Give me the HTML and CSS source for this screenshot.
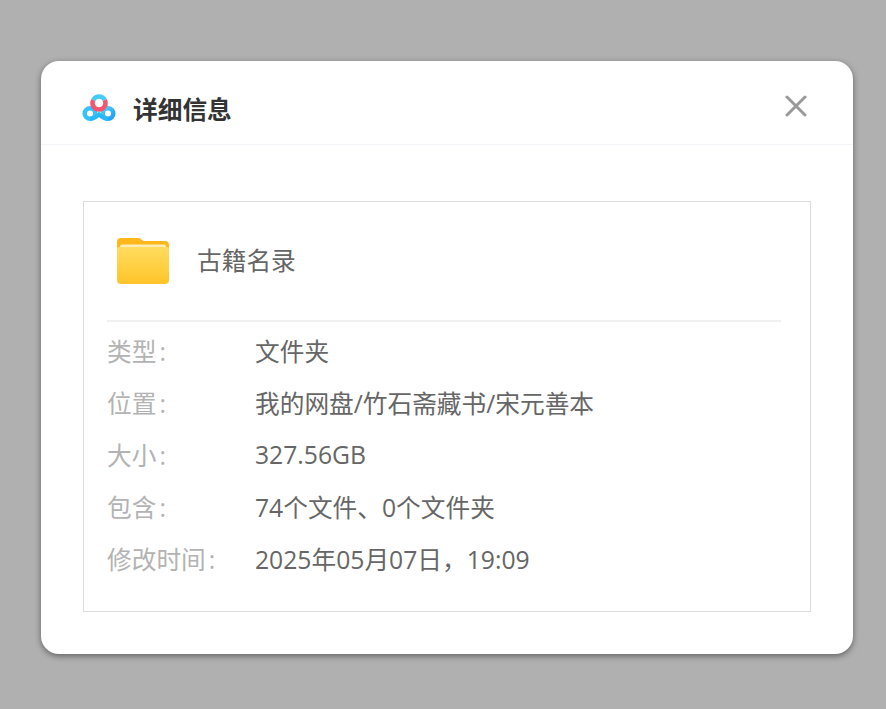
FILE: index.html
```html
<!DOCTYPE html>
<html lang="zh-CN">
<head>
<meta charset="utf-8">
<title>详细信息</title>
<link rel="stylesheet" href="styles.css">
</head>
<body>
<div class="modal">
  <header class="head">
    <svg class="logo" width="34" height="28" viewBox="0 0 34 28" fill="none">
      <defs>
        <linearGradient id="lb" x1="0" y1="0" x2="1" y2="1"><stop offset="0" stop-color="#4fd2fb"/><stop offset="1" stop-color="#1a9dfb"/></linearGradient>
      </defs>
      <circle cx="8" cy="19.500" r="5.300" stroke="#35c3fb" stroke-width="4.500"/>
      <circle cx="26" cy="19.500" r="5.300" stroke="url(#lb)" stroke-width="4.500"/>
      <path d="M8 24.800 Q13 24.800 17 20.500 Q21 24.800 26 24.800" stroke="#2bb8fb" stroke-width="4"/>
      <path d="M11.300 6 A6.500 6.500 0 0 1 22.700 6" stroke="#45ccfb" stroke-width="4.500"/>
      <path d="M11.300 6 A6.500 6.500 0 1 0 22.700 6" stroke="#f4566f" stroke-width="4.500"/>
    </svg>
    <h1 class="title">详细信息</h1>
    <svg class="close" width="22" height="22" viewBox="0 0 22 22" fill="none">
      <path d="M2 2 L20 20 M20 2 L2 20" stroke="#999" stroke-width="3" stroke-linecap="round"/>
    </svg>
  </header>
  <main class="body">
    <section class="box">
      <div class="file">
        <svg class="folder" width="54" height="48" viewBox="0 0 54 48" fill="none">
          <defs>
            <linearGradient id="fg" x1="0" y1="0" x2="0" y2="1"><stop offset="0" stop-color="#ffdc5f"/><stop offset="1" stop-color="#ffc429"/></linearGradient>
          </defs>
          <path d="M1 5 Q1 1 5 1 H22 Q25 1 27 4 H49 Q53 4 53 8 V24 H1 Z" fill="#ffb71b"/>
          <rect x="4" y="7.500" width="46" height="6" rx="2" fill="#ffedb8"/>
          <path d="M1 12 Q1 10 3 10 H51 Q53 10 53 12 V43 Q53 47 49 47 H5 Q1 47 1 43 Z" fill="url(#fg)"/>
        </svg>
        <span class="filename">古籍名录</span>
      </div>
      <dl class="info">
        <div class="row"><dt>类型<span class="colon">:</span></dt><dd>文件夹</dd></div>
        <div class="row"><dt>位置<span class="colon">:</span></dt><dd>我的网盘/竹石斋藏书/宋元善本</dd></div>
        <div class="row"><dt>大小<span class="colon">:</span></dt><dd>327.56GB</dd></div>
        <div class="row"><dt>包含<span class="colon">:</span></dt><dd>74个文件、0个文件夹</dd></div>
        <div class="row"><dt>修改时间<span class="colon">:</span></dt><dd>2025年05月07日，19:09</dd></div>
      </dl>
    </section>
  </main>
</div>
</body>
</html>
```
FILE: styles.css
```css
* { box-sizing: border-box; }
html, body { margin: 0; height: 100%; }
body {
  background: #b0b0b0;
  font-family: "Open Sans", "Noto Sans CJK SC", sans-serif;
  padding: 61px 33px 55px 41px;
}
.modal {
  width: 812px;
  height: 593px;
  background: #fff;
  border-radius: 18px;
  box-shadow: 0 2px 6px rgba(0, 0, 0, 0.45);
  display: flex;
  flex-direction: column;
}
.head {
  height: 84px;
  flex: none;
  border-bottom: 1px solid #f5f3f8;
  display: flex;
  align-items: center;
  padding: 0 46px 0 41px;
}
.logo { flex: none; margin-top: 10px; }
.title {
  margin: 14px 0 0 17px;
  flex: 1;
  font-size: 24.7px;
  line-height: 32px;
  font-weight: 700;
  color: #333;
}
.close { flex: none; margin-top: 7px; }
.body { padding: 56px 42px 42px; flex: 1; display: flex; }
.box {
  flex: 1;
  border: 1px solid #dcdcdc;
  padding: 0 29px 0 23px;
}
.file {
  height: 120px;
  border-bottom: 2px solid #f0f0f0;
  display: flex;
  align-items: center;
  padding: 0 0 0 9px;
}
.folder { flex: none; }
.filename {
  margin-left: 27px;
  font-size: 24.7px;
  line-height: 32px;
  color: #666;
}
.info { margin: 2px 0 0; }
.row {
  display: flex;
  height: 52px;
  align-items: center;
  font-size: 24.7px;
}
.row dt { width: 148px; flex: none; color: #b3b3b3; }
.row dd { margin: 0; color: #666; }
.colon { margin-left: 3px; }
```
